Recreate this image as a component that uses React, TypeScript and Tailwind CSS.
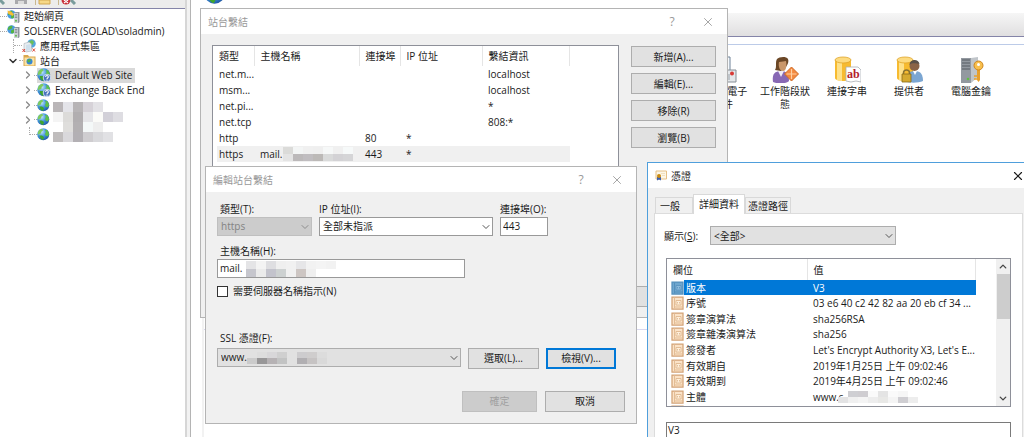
import { useState } from 'react'
import type { ReactNode } from 'react'
import { ChevronDown, ChevronRight, ChevronUp, X } from 'lucide-react'
import clsx from 'clsx'

/* ---------- icons ---------- */

function Globe({ size = 13, help = false }: { size?: number; help?: boolean }) {
  return (
    <svg width={size} height={size} viewBox="0 0 26 26" className="shrink-0">
      <defs>
        <radialGradient id="sea" cx="0.35" cy="0.3" r="0.8">
          <stop offset="0" stopColor="#c4e6fb" />
          <stop offset="0.5" stopColor="#3f93dc" />
          <stop offset="1" stopColor="#1a4f9c" />
        </radialGradient>
      </defs>
      <circle cx="12.5" cy="12.5" r="12" fill="url(#sea)" />
      <path d="M3 6c2-3 5-4 8-4l1 3-3 2-1 4-4 1-2 2c-1-3 0-6 1-8z" fill="#7ecb5c" />
      <path d="M5 15l5 0 4 3-1 4-2 2c-3-1-6-5-6-9z" fill="#3fa52f" />
      <path d="M16 4l4 0c3 3 4 6 4 9l-3 4-4-2-1-4 2-3z" fill="#5fc04a" />
      {help && (
        <>
          <circle cx="18.5" cy="18.5" r="7" fill="#4a74be" stroke="#e6eefb" strokeWidth="1.5" />
          <path d="M16 16.5c0-3.5 5-3.5 5 0 0 2-2.5 2-2.5 4M18.5 21.5v2" fill="none" stroke="#fff" strokeWidth="2" />
        </>
      )}
    </svg>
  )
}

function ServerGlobe({ start = false }: { start?: boolean }) {
  return (
    <svg width="13" height="13" viewBox="0 0 26 26" className="shrink-0">
      <circle cx="9" cy="9" r="8.5" fill="#4a9be0" />
      <path d="M2 6c2-4 6-5 9-4l-1 5-4 2-4 1zM8 11l6-3 2 4-4 5-4-1z" fill="#55b443" />
      {start && <path d="M1 1l7 2 6 5-3 4-9-5z" fill="#f5bc38" />}
      <path d="M14 6l3-2h8v20l-2 2h-9z" fill="#8d959c" />
      <path d="M14 6h8v20h-8z" fill="#cdd2d6" />
      <path d="M15.5 9h5M15.5 12h5M15.5 15h5" stroke="#6b747c" strokeWidth="1.3" />
      <circle cx="18" cy="21.5" r="1.8" fill="#51b53a" />
    </svg>
  )
}

function AppPools() {
  return (
    <svg width="14" height="14" viewBox="0 0 28 28" className="shrink-0">
      <circle cx="19" cy="9" r="8.5" fill="#55a5dc" />
      <path d="M13 6l7-4 4 4-3 6-6-1z" fill="#6cbf57" />
      <path d="M4 9l10-3 5 4v14l-11 2-4-4z" fill="#e9edf0" stroke="#9aa5ae" />
      <path d="M8 12l9-2v12l-9 2z" fill="#cfe0ec" />
      <path d="M1 20l5 6M6 20l-5 6M21 19l5 6M26 19l-5 6" stroke="#d9473b" strokeWidth="2" />
    </svg>
  )
}

function SitesFolder() {
  return (
    <svg width="13" height="13" viewBox="0 0 26 26" className="shrink-0">
      <path d="M1 2h9l2 3h13v19H1z" fill="#d9a84e" />
      <path d="M3 7h20v16H3z" fill="#fae3a4" />
      <circle cx="13" cy="15" r="6" fill="#3687d4" />
      <path d="M9 12l5-2 2 3-4 4-3-1z" fill="#55b443" />
    </svg>
  )
}

function MailIcon() {
  return (
    <svg width="27" height="27" viewBox="0 0 27 27">
      <path d="M6 1h14v17H6z" fill="#f6f9fc" stroke="#6f8298" />
      <path d="M9 5h8M9 8h8M9 11h8" stroke="#9db3c8" />
      <path d="M11 14h15v12H11z" fill="#e4e7ea" stroke="#868e96" />
      <path d="M13 19h7M13 21h7M13 23h7" stroke="#9aa3ab" />
      <circle cx="22" cy="17.5" r="2" fill="#d83a36" />
    </svg>
  )
}

function SessionIcon() {
  return (
    <svg width="27" height="27" viewBox="0 0 27 27">
      <path d="M1 26c-1-7 1-10 6-11h4c4 1 6 4 6 10-3 3-12 3-16 1z" fill="#8768b4" />
      <path d="M6 15l3 6 3-6z" fill="#f0ebf6" />
      <path d="M3 14c2-3 0-8 2-11 2-2 9-3 11 0 1 2 0 5-2 8l-5 4z" fill="#6b4726" />
      <path d="M7 6c3 0 5-1 7-1 1 5 0 10-3 10s-5-4-4-9z" fill="#c9976a" />
      <path d="M19.5 11l7 7-7 7-7-7z" fill="#f3893f" stroke="#cf6a26" />
      <path d="M19.5 13v10M14.5 18h10" stroke="#ffd0a3" strokeWidth="1.2" />
    </svg>
  )
}

function Cylinder() {
  return (
    <>
      <path d="M1 4v18c0 4 16 4 16 0V4z" fill="#f7bb30" />
      <path d="M3 5v19c2 1 4 1 5 1V6z" fill="#fee18a" />
      <ellipse cx="9" cy="4" rx="8" ry="3" fill="#fddb80" stroke="#e0a428" strokeWidth="0.8" />
    </>
  )
}

function ConnectionIcon() {
  return (
    <svg width="27" height="27" viewBox="0 0 27 27">
      <Cylinder />
      <path d="M12 11h12l3 3v12l-5-1-5 1-5-1z" fill="#fff" stroke="#a9afb5" strokeWidth="0.8" />
      <text x="13" y="22" fontSize="12" fontWeight="700" fontFamily="Liberation Serif, serif" fill="#b3202a">ab</text>
    </svg>
  )
}

function ProviderIcon() {
  return (
    <svg width="27" height="27" viewBox="0 0 27 27">
      <Cylinder />
      <path d="M11 26c0-8 2-11 8-11s8 4 8 10c-4 2-12 2-16 1z" fill="#7ba6d2" />
      <path d="M17 15l2 4 2-4z" fill="#fff" />
      <circle cx="18.5" cy="10" r="5" fill="#8b6346" />
      <path d="M13.5 9c0-6 9-7 10-1-3 0-7-2-10 1z" fill="#5a5048" />
      <path d="M7.5 19v-2c0-4 6-4 6 0v2" fill="none" stroke="#8a7330" strokeWidth="1.5" />
      <path d="M6 18h9v8H6z" fill="#d5a92f" stroke="#8a6914" strokeWidth="0.8" />
    </svg>
  )
}

function MachineKeyIcon() {
  return (
    <svg width="27" height="27" viewBox="0 0 27 27">
      <path d="M3 2h10v25H3z" fill="#9399a0" />
      <path d="M13 2l7-1v20l-7 6z" fill="#c0c5ca" />
      <path d="M4 4h8M4 7h8M4 10h8M4 13h8" stroke="#565c62" strokeWidth="1.2" />
      <circle cx="10" cy="23" r="1.3" fill="#5fc043" />
      <path d="M19 13h3v11l-1.5 2L19 24z" fill="#e8a02c" />
      <circle cx="20.5" cy="9.5" r="4.5" fill="#f8bf4c" stroke="#cc841e" />
      <circle cx="20.5" cy="8.5" r="1.5" fill="#fff" />
      <path d="M16 20h4M16 23h4" stroke="#e8a02c" strokeWidth="1.5" />
    </svg>
  )
}

function CertIcon() {
  return (
    <svg width="12" height="11" viewBox="0 0 24 22" className="shrink-0">
      <path d="M2 2h21v16H2z" fill="#fdf6e6" stroke="#e6c086" strokeWidth="2" />
      <path d="M12 7h8M14 11h6" stroke="#ecd8b2" strokeWidth="1.5" />
      <path d="M4 14h8v7l-4-2-4 2z" fill="#3a5fb0" />
      <circle cx="8" cy="12" r="4" fill="#c98a10" />
    </svg>
  )
}

function FieldIcon({ active = false }: { active?: boolean }) {
  return (
    <svg width="13" height="14" viewBox="0 0 26 28" className="shrink-0">
      <path d="M2 2h22v24H2z" fill={active ? '#6fa7cf' : '#fbe3c8'} stroke={active ? '#5590bc' : '#d3a377'} strokeWidth="2.5" />
      <path d="M7 3v22M7 22h17" fill="none" stroke={active ? '#5590bc' : '#e3bd95'} strokeWidth="2" />
      <path d="M10 9h10v9H10zM13 12v3M17 12v3" fill={active ? '#8dbbdc' : '#fff0dc'} stroke={active ? '#5590bc' : '#dcb187'} strokeWidth="1.6" />
    </svg>
  )
}

// blocks drawn over private names
function Mosaic({ rows, cell = 10, className }: { rows: string[][]; cell?: number; className?: string }) {
  const cols = Math.max(...rows.map(r => r.length))
  return (
    <svg width={cols * 10} height={rows.length * cell} className={className} shapeRendering="crispEdges">
      {rows.map((row, y) =>
        row.map((fill, x) => fill && <rect key={`${x}-${y}`} x={x * 10} y={y * cell} width="10" height={cell} fill={fill} />)
      )}
    </svg>
  )
}

const treeBlocks = [
  ['#bab6b8', '#e4e4e9', '#b7b4b6', '#d6d2d8', '#e3e2e6'],
  ['#f4f4f4', '#dcdbd9', '#b1aeb0', '#e5e5e8', '#fbfbf8', '#d2d0d8', '#dedde2'],
  ['', '#dfdedc', '#b3b0b2', '#f4f8f8', '#eeeeee'],
  ['#c0bdbd', '#d9d8db', '#b3b0b4', '#cfcdd0', '#d9d9dc', '#e1e1e4'],
]
const bindingBlocks = [
  ['#dbdbd9', '#f3f5f5', '#f0f0f0', '#efefef', '#f6f8f8', '#f0f0f0', '#f6f9f9'],
  ['#e4e4e4', '#bcb9ba', '#c0bdc0', '#bcb9b7', '#d9dada', '#d3d2d5', '#d5d5d7'],
]
const hostBlocks = [
  ['#e4e4e6', '#f3f3f3', '#dedee1', '#efefef', '#f1f1f1', '#e6e6e8', '#f2f2f2', '#f4f4f4', '#f2f2f2'],
  ['#c6c6cd', '#ebebeb', '#c3c3cc', '#cdd1d1', '#f1f1f1', '#cdc6c3', '#efefef'],
]
const sslBlocks = [
  ['', '#dddddd', '#d8d7d9', '#cfcfcf', '', '#cdccce', '#cfcdcd', '#dcdcdc'],
  ['#cbcbcb', '#989798', '#b6b2b4', '#c2c3c3', '', '#b1afb2', '#c6c3c3', '#d9d9d9'],
]
const subjectBlocks = [
  ['', '#cfcfd3', '#cfcdd1', '#fafafa', '#e4e4e4', '#fafafa', '#f6f6f6'],
  ['#e3e3e4', '#f0f0f0', '#f4f4f4', '#ededed', '#e8e8e6', '#f4f4f4', '#cfced2', '#ededed'],
]

/* ---------- controls ---------- */

function WinButton({ children, className, disabled, primary }: { children: ReactNode; className?: string; disabled?: boolean; primary?: boolean }) {
  return (
    <button
      type="button"
      disabled={disabled}
      className={clsx(
        'h-[21px] shrink-0',
        disabled && 'border border-[#bfbfbf] bg-[#cccccc] text-[#a0a0a0]',
        primary && 'border-2 border-[#0078d7] bg-[#e1e1e1]',
        !disabled && !primary && 'border border-[#adadad] bg-[#e1e1e1]',
        className
      )}
    >
      {children}
    </button>
  )
}

function SelectBox({ id, value, className, disabled, children }: { id: string; value: string; className: string; disabled?: boolean; children?: ReactNode }) {
  return (
    <div className={clsx('relative h-[19px] shrink-0', className)}>
      <select id={id} disabled={disabled} className="block h-full w-full appearance-none border border-inherit bg-transparent pl-[3px] opacity-100">
        <option>{value}</option>
      </select>
      {children}
      <ChevronDown className={clsx('pointer-events-none absolute top-1 right-px h-3 w-3', disabled ? 'text-[#8c8c8c]' : 'text-[#555]')} />
    </div>
  )
}

function TitleBar({ title }: { title: string }) {
  return (
    <div className="flex h-[25px] items-center bg-white pr-3 pl-[7px] text-[#999]">
      <h2 className="flex-1">{title}</h2>
      <button type="button" aria-label="Help" className="mr-[23px] w-3 text-xs">?</button>
      <button type="button" aria-label="Close"><X className="h-3.5 w-3.5" strokeWidth={1.5} /></button>
    </div>
  )
}

/* ---------- main window ---------- */

const sites = [
  { name: 'Default Web Site', help: true, open: true },
  { name: 'Exchange Back End', help: true, open: true },
  { name: '', help: false, open: true },
  { name: '', help: false, open: true },
  { name: '', help: false, open: false },
]

function Tree() {
  const [selected, setSelected] = useState('Default Web Site')
  return (
    <nav className="relative">
      <ul className="grid h-[133px] auto-rows-fr">
        <li className="flex items-center">
          <span className="w-[7px] border-t border-dotted border-[#aaa]" />
          <ServerGlobe start />
          <span className="pl-1">起始網頁</span>
        </li>
        <li className="flex items-center">
          <span className="w-[7px] border-t border-dotted border-[#aaa]" />
          <ServerGlobe />
          <span className="pl-1">SOLSERVER (SOLAD\soladmin)</span>
        </li>
        <li className="flex items-center">
          <span className="ml-[13px] h-full border-l border-dotted border-[#aaa]" />
          <span className="w-2 border-t border-dotted border-[#aaa]" />
          <AppPools />
          <span className="pl-1">應用程式集區</span>
        </li>
        <li className="flex items-center">
          <ChevronDown className="ml-[7px] h-3 w-3 text-[#333]" strokeWidth={3} />
          <span className="w-1 border-t border-dotted border-[#aaa]" />
          <SitesFolder />
          <span className="pl-1">站台</span>
        </li>
        {sites.map((s, i) => (
          <li key={i} className="flex items-center pl-[22px]">
            {s.open ? (
              <>
                <ChevronRight className="h-3 w-3 text-[#888]" strokeWidth={2.5} />
                <span className="w-[3px] border-t border-dotted border-[#aaa]" />
              </>
            ) : (
              <span className="ml-[7px] h-2 w-2 self-start border-b border-l border-dotted border-[#aaa]" />
            )}
            <button
              type="button"
              aria-label={s.name || 'Site'}
              onClick={() => s.name && setSelected(s.name)}
              className={clsx('flex h-full items-center gap-1 pr-[3px]', s.name && s.name === selected && 'bg-[#d9d9d9]')}
            >
              <Globe help={s.help} size={s.help ? 14 : 13} />
              {s.name}
            </button>
          </li>
        ))}
      </ul>
      <Mosaic rows={treeBlocks} className="absolute bottom-0 left-[53px]" />
    </nav>
  )
}

const features = [
  { label: 'SMTP 電子郵件', icon: MailIcon },
  { label: '工作階段狀態', icon: SessionIcon },
  { label: '連接字串', icon: ConnectionIcon },
  { label: '提供者', icon: ProviderIcon },
  { label: '電腦金鑰', icon: MachineKeyIcon },
]

function MainWindow() {
  return (
    <div className="flex h-full">
      <aside className="w-[185px] shrink-0">
        <div className="flex h-2 items-start bg-[#ececec]">
          <svg width="80" height="5" viewBox="0 0 80 5">
            <path d="M0 0l4 4" stroke="#7a9c9c" strokeWidth="3" />
            <path d="M15 0h12v4H15z" fill="#a9a9ac" />
            <path d="M18 1h6v3h-6z" fill="#dcdcdc" />
            <path d="M35.5 0v5M58.5 0v5" stroke="#c9b78f" />
            <path d="M39 0h11v4H39z" fill="#f6d888" stroke="#d1a752" />
            <circle cx="66" cy="0" r="4.5" fill="#c9303a" />
            <path d="M64 0l4 3M68 0l-4 3" stroke="#fff" strokeWidth="1.2" />
            <path d="M71 0l4 4" stroke="#7a9c9c" strokeWidth="3" />
          </svg>
        </div>
        <div className="border-t border-[#8484a8]"><Tree /></div>
      </aside>
      <div className="w-1.5 shrink-0 border-r border-l-2 border-r-[#b4b4b4] border-l-[#d6d6d6] bg-[#f2f2f2]" />
      <main className="min-w-0 flex-1 pl-[11px]">
        <div className="flex h-[13px] items-end overflow-hidden pb-2 pl-0.5"><Globe size={22} /></div>
        <div className="h-full border-l-2 border-[#f2f2f2]">
          <div className="h-6 border-b border-[#8484a8] bg-linear-to-b from-[#f6f6f6] to-[#e0dfe0]" />
          <div className="mt-[7px] border-y border-t-[#bccbe8] border-b-[#d8d8f0]">
            <ul className="flex h-[284px] pt-[11px] pl-[488px]">
              {features.map(({ label, icon: Icon }) => (
                <li key={label} className="flex w-[62px] shrink-0 flex-col items-center px-[5px] text-center leading-[13px]">
                  <Icon />
                  <span className="mt-0.5">{label}</span>
                </li>
              ))}
            </ul>
          </div>
        </div>
      </main>
    </div>
  )
}

/* ---------- site bindings ---------- */

const bindings = [
  { type: 'net.m...', info: 'localhost' },
  { type: 'msm...', info: 'localhost' },
  { type: 'net.pi...', info: '*' },
  { type: 'net.tcp', info: '808:*' },
  { type: 'http', port: '80', ip: '*' },
  { type: 'https', host: 'mail.', port: '443', ip: '*' },
]

function BindingsDialog() {
  return (
    <section className="absolute top-2 left-[200px] w-[528px] border border-[#b4b4b4] bg-[#f0f0f0]">
      <TitleBar title="站台繫結" />
      <div className="flex gap-3 px-[11px] pt-[11px]">
        <div className="h-[230px] flex-1 border border-[#8e9099] bg-white pl-1">
          <table className="w-[353px] table-fixed text-left whitespace-nowrap">
            <thead>
              <tr className="h-5">
                <th className="w-[37px] border-r border-[#e5e5e5] pl-0.5 font-normal">類型</th>
                <th className="w-[105px] border-r border-[#e5e5e5] pl-1.5 font-normal">主機名稱</th>
                <th className="w-[41px] border-r border-[#e5e5e5] pl-1.5 font-normal">連接埠</th>
                <th className="w-[82px] border-r border-[#e5e5e5] pl-1.5 font-normal">IP 位址</th>
                <th className="border-r border-[#e5e5e5] pl-1.5 font-normal">繫結資訊</th>
              </tr>
            </thead>
            <tbody>
              {bindings.map(b => (
                <tr key={b.type} className={clsx('h-4 leading-[15px]', b.type === 'https' && 'bg-[#f0f0f0]')}>
                  <td className="pl-0.5">{b.type}</td>
                  <td className="pl-1.5">
                    {b.host && (
                      <span className="flex items-center">
                        {b.host}
                        <Mosaic rows={bindingBlocks} cell={7} />
                      </span>
                    )}
                  </td>
                  <td className="pl-1.5">{b.port}</td>
                  <td className="pl-1.5">{b.ip}</td>
                  <td className="pl-1.5">{b.info}</td>
                </tr>
              ))}
            </tbody>
          </table>
        </div>
        <div className="flex w-[85px] flex-col gap-1.5 pt-px">
          <WinButton>新增(A)...</WinButton>
          <WinButton>編輯(E)...</WinButton>
          <WinButton>移除(R)</WinButton>
          <WinButton>瀏覽(B)</WinButton>
        </div>
      </div>
      <div className="flex justify-end px-[11px] pt-[11px] pb-2.5">
        <WinButton className="w-[85px]">關閉(C)</WinButton>
      </div>
    </section>
  )
}

/* ---------- edit binding ---------- */

function EditDialog() {
  const [sni, setSni] = useState(false)
  return (
    <section className="absolute top-[166px] left-[205px] w-[432px] border border-[#b4b4b4] bg-[#f0f0f0]">
      <TitleBar title="編輯站台繫結" />
      <form className="px-[11px] pt-2.5 pb-[11px] leading-[15px]">
        <div className="flex gap-[7px]">
          <div className="w-[95px]">
            <label htmlFor="type" className="block pl-[3px]">類型(T):</label>
            <SelectBox id="type" value="https" disabled className="border-[#bfbfbf] bg-[#cccccc] text-[#838383]" />
          </div>
          <div className="w-[174px]">
            <label htmlFor="ip" className="block">IP 位址(I):</label>
            <SelectBox id="ip" value="全部未指派" className="border-[#999] bg-white" />
          </div>
          <div className="w-12">
            <label htmlFor="port" className="block">連接埠(O):</label>
            <input id="port" defaultValue="443" className="block h-[19px] w-full border border-[#999] bg-white px-0.5 pb-0.5" />
          </div>
        </div>
        <label htmlFor="host" className="mt-2 block pl-[3px]">主機名稱(H):</label>
        <div className="relative w-[248px]">
          <input id="host" defaultValue="mail." className="block h-[19px] w-full border border-[#999] bg-white px-0.5 pb-0.5" />
          <Mosaic rows={hostBlocks} cell={8} className="absolute top-0.5 left-[29px]" />
        </div>
        <label className="mt-2 flex h-[11px] items-center gap-[5px]">
          <input
            type="checkbox"
            checked={sni}
            onChange={e => setSni(e.target.checked)}
            className="h-[11px] w-[11px] appearance-none border border-[#333] bg-white checked:bg-[#0078d7]"
          />
          需要伺服器名稱指示(N)
        </label>
        <label htmlFor="ssl" className="mt-[34px] block pl-[3px]">SSL 憑證(F):</label>
        <div className="mt-0.5 flex gap-[7px]">
          <SelectBox id="ssl" value="www." className="w-[244px] border-[#adadad] bg-[#e1e1e1]">
            <Mosaic rows={sslBlocks} cell={6} className="absolute top-1 left-[30px]" />
          </SelectBox>
          <WinButton className="w-[71px]">選取(L)...</WinButton>
          <WinButton primary className="w-[70px]">檢視(V)...</WinButton>
        </div>
        <div className="mt-[22px] flex justify-end gap-2">
          <WinButton disabled className="w-[75px]">確定</WinButton>
          <WinButton className="w-20">取消</WinButton>
        </div>
      </form>
    </section>
  )
}

/* ---------- certificate ---------- */

const fields = [
  { name: '版本', value: 'V3' },
  { name: '序號', value: '03 e6 40 c2 42 82 aa 20 eb cf 34 ...' },
  { name: '簽章演算法', value: 'sha256RSA' },
  { name: '簽章雜湊演算法', value: 'sha256' },
  { name: '簽發者', value: "Let's Encrypt Authority X3, Let's E..." },
  { name: '有效期自', value: '2019年1月25日 上午 09:02:46' },
  { name: '有效期到', value: '2019年4月25日 上午 09:02:46' },
  { name: '主體', value: 'www.s' },
  { name: '', value: '' },
]

function CertificateDialog() {
  return (
    <section className="absolute top-[162px] left-[647px] w-[383px] border border-[#4f9fdc] bg-[#f0f0f0]">
      <div className="flex h-[25px] items-center gap-1 bg-white pr-1 pl-[7px]">
        <CertIcon />
        <h2 className="flex-1">憑證</h2>
        <button type="button" aria-label="Close"><X className="h-3.5 w-3.5" strokeWidth={2} /></button>
      </div>
      <div role="tablist" className="flex items-end pt-1.5 pl-[7px]">
        <button type="button" role="tab" className="h-4 w-[38px] border border-b-0 border-[#d9d9d9] pr-2">一般</button>
        <button type="button" role="tab" aria-selected className="relative -mb-px h-5 w-[52px] border border-b-0 border-[#d9d9d9] bg-white pb-0.5">詳細資料</button>
        <button type="button" role="tab" className="h-4 w-[46px] border border-b-0 border-[#d9d9d9]">憑證路徑</button>
      </div>
      <div className="mx-1.5 border border-[#dcdcdc] bg-white px-[11px] pt-3">
        <div className="flex items-center">
          <label htmlFor="show" className="-ml-0.5 w-[46px]">顯示(<u>S</u>):</label>
          <SelectBox id="show" value="<全部>" className="w-[186px] border-[#adadad] bg-[#e1e1e1]" />
        </div>
        <div className="mt-[13px] flex h-[149px] overflow-hidden border border-[#8e9099]">
          <div className="flex-1 overflow-hidden">
            <table className="h-[161px] w-[309px] table-fixed text-left leading-3 whitespace-nowrap">
              <thead>
                <tr className="h-[21px]">
                  <th className="w-[140px] border-r border-[#e5e5e5] pl-1.5 font-normal">欄位</th>
                  <th className="border-r border-[#e5e5e5] pl-1.5 font-normal">值</th>
                </tr>
              </thead>
              <tbody>
                {fields.map((f, i) => (
                  <tr key={i} className={clsx(i === 0 && 'text-white')}>
                    <td className="pl-1">
                      <div className="flex h-full items-center">
                        <FieldIcon active={i === 0} />
                        <span className={clsx('flex h-[15px] flex-1 items-center pl-0.5', i === 0 && 'bg-[#0078d7]')}>{f.name}</span>
                      </div>
                    </td>
                    <td>
                      <div className={clsx('flex h-[15px] items-center pl-1.5', i === 0 && 'bg-[#0078d7]')}>
                        {f.value}
                        {f.name === '主體' && <Mosaic rows={subjectBlocks} cell={6} className="-ml-1.5" />}
                      </div>
                    </td>
                  </tr>
                ))}
              </tbody>
            </table>
          </div>
          <div className="flex w-3.5 shrink-0 flex-col items-center bg-[#f0f0f0]">
            <ChevronUp className="my-0.5 h-[11px] w-3 text-[#444]" strokeWidth={3} />
            <span className="h-[45px] w-[13px] bg-[#cdcdcd]" />
            <ChevronDown className="mt-auto mb-0.5 h-[11px] w-3 text-[#444]" strokeWidth={3} />
          </div>
        </div>
        <textarea aria-label="值" readOnly value="V3" className="mt-[15px] block h-24 w-full resize-none border border-[#7a7a7a] px-px leading-[15px]" />
      </div>
    </section>
  )
}

export default function App() {
  return (
    <div className="relative h-screen overflow-hidden bg-white font-['Open_Sans','Noto_Sans_CJK_TC',sans-serif] text-[10px] leading-[14px] text-[#1a1a1a]">
      <MainWindow />
      <BindingsDialog />
      <EditDialog />
      <CertificateDialog />
    </div>
  )
}
